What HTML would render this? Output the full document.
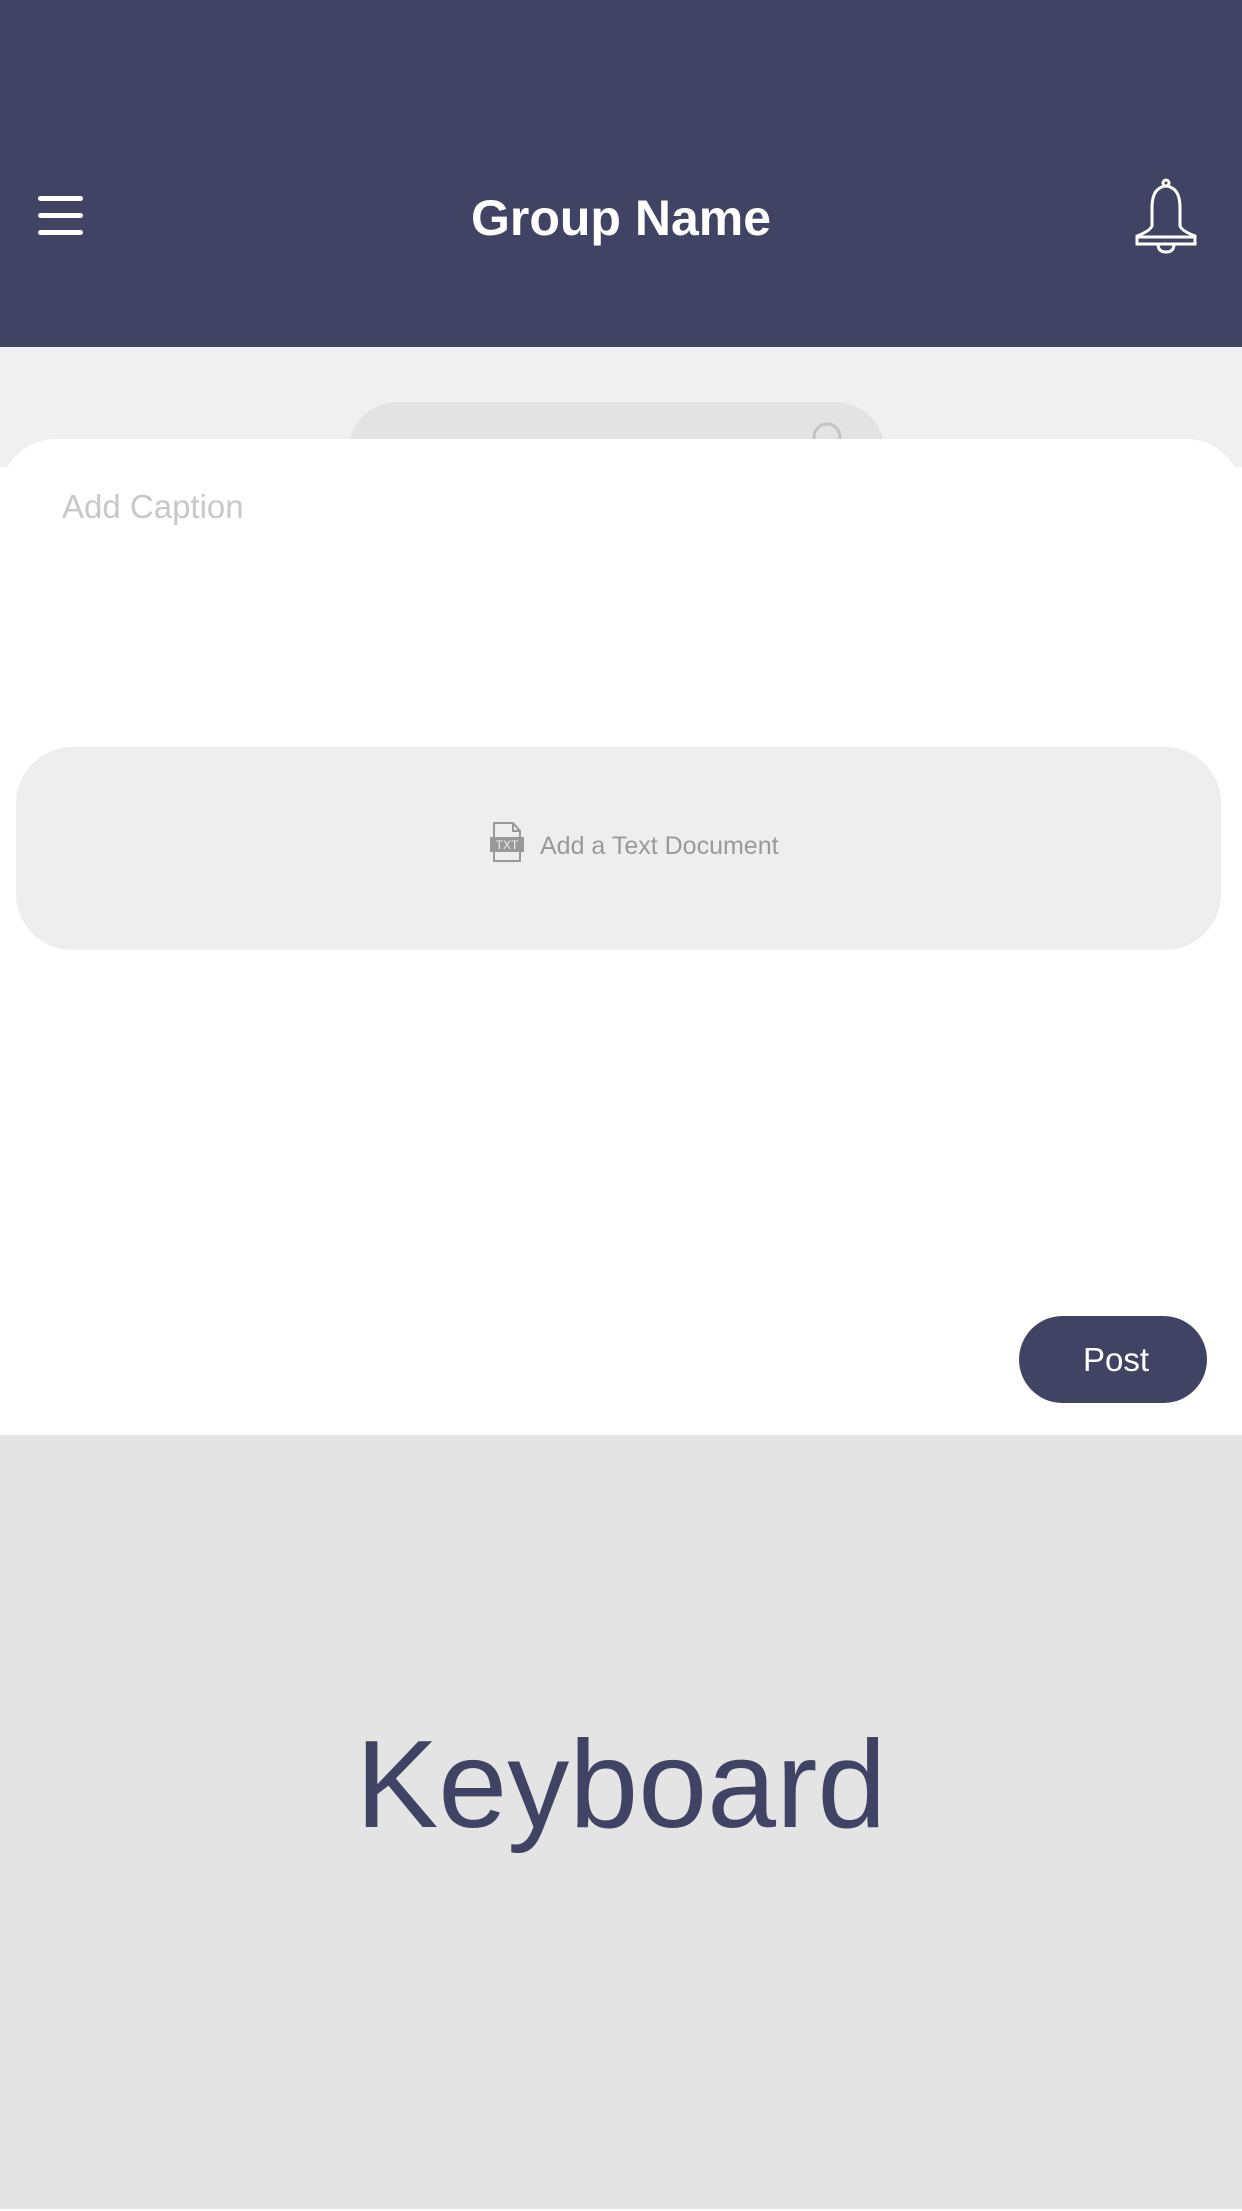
<!DOCTYPE html>
<html><head><meta charset="utf-8"><style>
*{margin:0;padding:0;box-sizing:border-box}
body{width:1242px;height:2211px;position:relative;background:#fff;font-family:"Liberation Sans",sans-serif;overflow:hidden}
.hdr{position:absolute;left:0;top:0;width:1242px;height:347px;background:#404364}
.title{position:absolute;left:0;width:1242px;top:183px;text-align:center;color:#fff;font-size:50px;font-weight:bold;line-height:70px}
.ham{position:absolute;left:38px;height:5px;width:45px;background:#fff;border-radius:3px}
.grey{position:absolute;left:0;top:347px;width:1242px;height:120px;background:#f0f0f0}
.search{position:absolute;left:348px;top:402px;width:537px;height:100px;border-radius:50px;background:#e3e3e3}
.sheet{position:absolute;left:0;top:439px;width:1242px;height:1000px;background:#fff;border-radius:56px 56px 0 0}
.cap{position:absolute;left:62px;top:488px;font-size:33px;color:#c8c8c8}
.doc{position:absolute;left:16px;top:747px;width:1205px;height:203px;border-radius:56px;background:#eeeeee}
.doctext{position:absolute;left:540px;top:832px;font-size:25px;color:#999}
.post{position:absolute;left:1019px;top:1316px;width:188px;height:87px;border-radius:44px;background:#404364;color:#fff;font-size:33px;text-align:center;line-height:87px;padding-left:6px}
.kb{position:absolute;left:0;top:1435px;width:1242px;height:774px;background:#e4e4e4}
.kbt{position:absolute;left:0;width:1242px;top:1705px;text-align:center;font-size:124px;color:#404364;line-height:160px}
</style></head><body>
<div class="hdr">
<div class="ham" style="top:196px"></div><div class="ham" style="top:213px"></div><div class="ham" style="top:230px"></div>
<div class="title">Group Name</div>
<svg style="position:absolute;left:1134px;top:178px" width="64" height="76" viewBox="0 0 64 76" fill="none" stroke="#fff" stroke-width="3">
<circle cx="32" cy="5" r="3"/><path d="M26 10 Q32 6 38 10 Q46 14 46 30 L46 48 Q48 53 61 58 L61 66 L3 66 L3 58 Q16 53 18 48 L18 30 Q18 14 26 10Z"/><path d="M3 59 L61 59"/><path d="M24 66 Q24 74 32 74 Q40 74 40 66"/></svg>
</div>
<div class="grey"></div>
<div class="search"></div>
<svg style="position:absolute;left:812px;top:422px" width="30" height="30"><circle cx="15" cy="15" r="13" fill="none" stroke="#c4c4c4" stroke-width="3"/></svg>
<div class="sheet"></div>
<div class="cap">Add Caption</div>
<div class="doc"></div>
<svg style="position:absolute;left:489px;top:822px" width="36" height="40" viewBox="0 0 36 40" fill="none" stroke="#999" stroke-width="2">
<path d="M5 1 L24 1 L31 9 L31 39 L5 39 Z"/><path d="M24 1 L24 9 L31 9"/><rect x="1" y="15" width="34" height="15" fill="#999" stroke="none"/>
<text x="18" y="27" font-size="12" fill="#eee" stroke="none" text-anchor="middle" font-family="Liberation Sans">TXT</text></svg>
<div class="doctext">Add a Text Document</div>
<div class="post">Post</div>
<div class="kb"></div>
<div class="kbt">Keyboard</div>
</body></html>
